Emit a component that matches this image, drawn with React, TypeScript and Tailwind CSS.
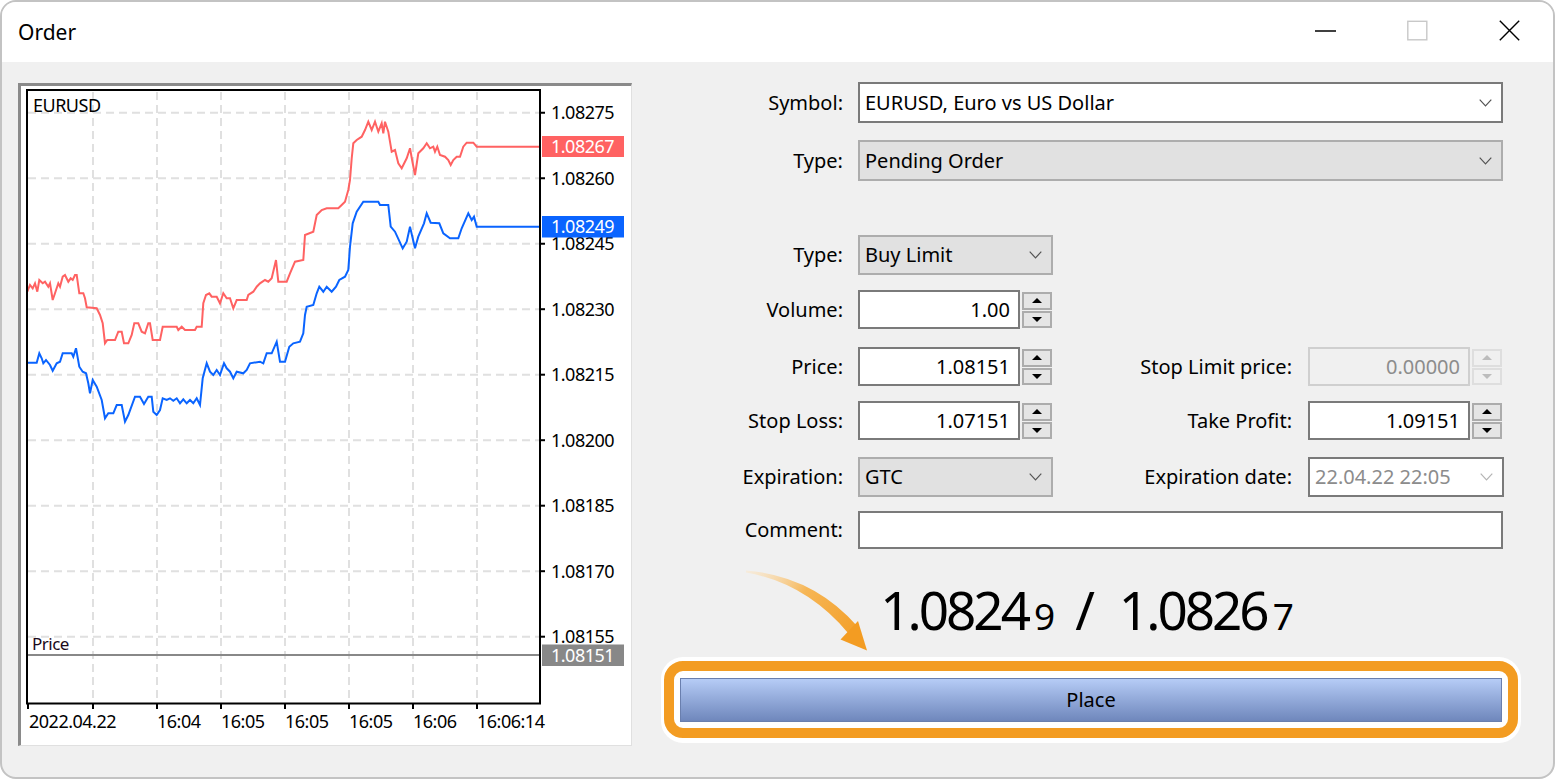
import React from 'react';

const RED = '#ff6262';
const BLUE = '#0a64ff';

const redPoints =
  '27.3,291.7 30,285 32.7,288.3 35,283.3 37.3,291.7 39.3,280 42.7,283.3 45,281.7 48.3,286.7 50,283.3 52.7,300 55,293.3 58.3,283.3 60,286.7 62.7,276.7 65,275 68.3,281.7 70.7,278.3 72.7,280 75,275 76.7,275 79.3,293.3 83.3,293.3 85,298.3 86.7,307.3 96.7,308.3 100,315 102.7,323.3 105,343.3 107.3,340 115,340 118.3,331.7 121.7,331.7 124,343.3 128.3,343.3 131.7,335 134.3,323.3 138.3,323.3 141.7,331.7 145,333.3 148.3,323.3 150,323.3 152.7,340 160,340 162.7,326.7 176.7,326.7 178.3,330 181.7,326.7 185,330 195,330 196.7,326.7 201.7,326.7 203.3,303.3 206,295 209.3,293.3 211.7,296.7 216.7,296.7 220,303.3 223.3,293.3 226.7,298.3 230,298.3 233.3,308.3 236.7,300 246.7,300 248.3,295 253.3,291.7 256.7,286.7 260,283.3 265,280 268.3,281.7 271.7,278.3 276,260 278.3,281.7 286.7,281.7 290,273.3 295,261.7 303.3,260 305,235 313.3,231.7 316.7,215 321.7,210 326.7,208.3 338.3,208.3 341.7,205 345,201.7 348.3,190 350,180 351.7,158.3 353.3,143.3 356.7,140 361.7,136.7 365,130 368.3,121.7 371.7,130 375,121.7 378.3,131.7 381.7,123.3 383.3,133.3 385,121.7 388.3,131.7 391.7,151.7 395,150 398.3,163.3 401.7,168.3 406.7,158.3 410,148.3 412.7,163.3 415,175 418.3,153.3 423.3,148.3 426.7,143.3 430,148.3 433.3,146.7 435,151.7 437.3,146.7 440,155 445,156.7 448.3,160 450.7,165 453.3,160 456.7,156.7 460,156.7 463.3,146.7 466.7,142.7 473.3,142.7 476.7,146.7 540,146.7';

const bluePoints =
  '27.3,362.7 36.7,362.7 39.3,353.3 41.7,358.3 43.3,363.3 46,360 50,365 52.7,370.7 56.7,363.3 60,361.7 62.7,353.3 71.7,353.3 73.3,356.7 76,348.3 79.3,366.7 82.7,371.7 86,373.3 88.3,383.3 90,393.3 92.7,380 96.7,386.7 101.7,400 105,418.3 108.3,413.3 113.3,413.3 116.7,405 121.7,405 125,421.7 128.3,415 135,396.7 140,396.7 144,404 148.3,396.7 151.7,396.7 153.3,411.7 156.7,415 160,410 162.7,398.3 166.7,400 170,398.3 173.3,400.7 176.7,398.3 180,403.3 183.3,399.3 186.7,403.3 190,400 193.3,403.3 196.7,398.3 200,405 202.7,378.3 206.7,363.3 210,371.7 213.3,375 216.7,370 220,375 224,363.3 226.7,368.3 230,371.7 233.3,378.3 236.7,371.7 243.3,373.3 246.7,370 250,363.3 260,361.7 263.3,363.3 266.7,353.3 271.7,353.3 276.7,341.7 280,361.7 285,361.7 289.3,346.7 293.3,343.3 300,341.7 303.3,333.3 305,315 306.7,306.7 313.3,305 316.7,293.3 319.3,286.7 323.3,291.7 326.7,286.7 331.7,291.7 336,286.7 339.3,280 345,276.7 348.3,270 350,246.7 352.7,223.3 356.7,211.7 363.3,201.7 378.3,201.7 380,205 388.3,205 390.7,226.7 395,231.7 402.7,248.3 406.7,241.7 410,226.7 415,248.3 418.3,236.7 424,223.3 426.7,213.3 430.7,222.7 439.3,223.3 443.3,233.3 450,238.3 458.3,238.3 461.7,228.3 468.3,213.3 471.7,220 474,216.7 476.7,226.7 540,226.7';

const priceLabels = ['1.08275', '1.08260', '1.08245', '1.08230', '1.08215', '1.08200', '1.08185', '1.08170', '1.08155'];
const gridXs = [93, 157, 221, 285, 349, 413, 477];
const timeLabels = [
  { x: 29, t: '2022.04.22' },
  { x: 157, t: '16:04' },
  { x: 221, t: '16:05' },
  { x: 285, t: '16:05' },
  { x: 349, t: '16:05' },
  { x: 413, t: '16:06' },
  { x: 477, t: '16:06:14' },
];

const gridY = (k: number) => 112.7 + 65.5 * k;

/**
 * Tick chart with bid/ask lines, drawn in page coordinates via the viewBox
 */
function PriceChart() {
  const font = { fontFamily: 'Noto Sans, sans-serif', fontSize: 18, letterSpacing: -0.5 };
  return (
    <svg width={610} height={659} viewBox="21 86 610 659" className="block">
      {/* grid */}
      {priceLabels.map((_, k) => (
        <line key={k} x1={28} x2={539} y1={gridY(k)} y2={gridY(k)} stroke="#e0e0e0" strokeWidth={2} strokeDasharray="8 5" />
      ))}
      {gridXs.map((x) => (
        <line key={x} x1={x} x2={x} y1={92} y2={702} stroke="#e0e0e0" strokeWidth={2} strokeDasharray="8 5" />
      ))}

      {/* pending price level */}
      <line x1={28} x2={539} y1={655} y2={655} stroke="#888888" strokeWidth={2} />
      <text x={32} y={650} {...font} fontSize={17} fill="#1a0a1a">Price</text>

      {/* ask / bid */}
      <polyline points={redPoints} fill="none" stroke={RED} strokeWidth={2} strokeLinejoin="miter" />
      <polyline points={bluePoints} fill="none" stroke={BLUE} strokeWidth={2} strokeLinejoin="miter" />

      {/* plot frame */}
      <rect x={27} y={90} width={513} height={613.5} fill="none" stroke="#000" strokeWidth={2} />
      <text x={33} y={111.5} {...font} fill="#000">EURUSD</text>

      {/* axis ticks */}
      {priceLabels.map((_, k) => (
        <line key={k} x1={540} x2={545} y1={gridY(k)} y2={gridY(k)} stroke="#000" strokeWidth={2} />
      ))}
      {[28, ...gridXs].map((x) => (
        <line key={x} x1={x} x2={x} y1={703} y2={709} stroke="#000" strokeWidth={2} />
      ))}

      {/* axis labels */}
      {priceLabels.map((p, k) => (
        <text key={p} x={551} y={gridY(k) + 6.4} {...font} fill="#000">{p}</text>
      ))}
      {timeLabels.map((l, i) => (
        <text key={i} x={l.x} y={728} {...font} fill="#000">{l.t}</text>
      ))}

      {/* current price tags */}
      <rect x={542} y={136} width={82} height={21} fill={RED} />
      <text x={551} y={153} {...font} fill="#fff">1.08267</text>
      <rect x={542} y={216} width={82} height={21.5} fill={BLUE} />
      <text x={551} y={233.2} {...font} fill="#fff">1.08249</text>
      <rect x={542} y={644.5} width={82} height={21.5} fill="#888888" />
      <text x={551} y={661.5} {...font} fill="#fff">1.08151</text>
    </svg>
  );
}

function Chevron({ color = '#505050' }: { color?: string }) {
  return (
    <svg width="13" height="8" viewBox="0 0 13 8" fill="none">
      <path d="M0.7 0.7L6.5 6.8L12.3 0.7" stroke={color} strokeWidth={1.2} />
    </svg>
  );
}

function Triangle({ up, color }: { up: boolean; color: string }) {
  return (
    <svg width="10" height="5" viewBox="0 0 10 5">
      <path d={up ? 'M0 5L5 0L10 5Z' : 'M0 0L10 0L5 5Z'} fill={color} />
    </svg>
  );
}

function Spinner({ disabled }: { disabled?: boolean }) {
  const box = disabled
    ? 'border-[#dedede] bg-[#f0f0f0]'
    : 'border-[#acacac] bg-[#e5e5e5]';
  const arrow = disabled ? '#bcbcbc' : '#000';
  return (
    <div className="ml-[2px] flex w-[30px] flex-col gap-[1px]">
      <div className={`flex h-[18px] items-center justify-center border-2 ${box}`}>
        <Triangle up color={arrow} />
      </div>
      <div className={`flex h-[17px] items-center justify-center border-2 ${box}`}>
        <Triangle up={false} color={arrow} />
      </div>
    </div>
  );
}

function NumberField({ value, disabled }: { value: string; disabled?: boolean }) {
  return (
    <div className="flex items-center">
      <div
        className={`flex h-[39px] w-[162px] items-center justify-end border-2 pr-[8px] ${
          disabled ? 'border-[#cfcfcf] text-[#8c8c8c]' : 'border-[#7a7a7a] bg-white text-black'
        }`}
      >
        {value}
      </div>
      <Spinner disabled={disabled} />
    </div>
  );
}

type ComboTone = 'white' | 'gray' | 'date';

function Combo({ value, width, height = 40, tone }: { value: string; width: number; height?: number; tone: ComboTone }) {
  const toneClass =
    tone === 'gray'
      ? 'bg-[#e1e1e1] border-[#adadad] text-black'
      : tone === 'date'
        ? 'bg-white border-[#7a7a7a] text-[#8c8c8c]'
        : 'bg-white border-[#7a7a7a] text-black';
  return (
    <div
      className={`flex items-center justify-between border-2 pl-[5px] pr-[9px] ${toneClass}`}
      style={{ width, height }}
    >
      <span className="whitespace-nowrap">{value}</span>
      <Chevron color={tone === 'date' ? '#b4b4b4' : '#555555'} />
    </div>
  );
}

function Label({ text, width = 211 }: { text: string; width?: number }) {
  return (
    <div className="shrink-0 whitespace-nowrap text-right text-black" style={{ width }}>
      {text}
    </div>
  );
}

function TitleBar() {
  return (
    <div className="flex h-[60px] shrink-0 items-start bg-white">
      <div className="pl-[16px] pt-[15px] text-[21px] text-black">Order</div>
      <div className="ml-auto flex gap-[71px] pr-[33px] pt-[18px]">
        <svg width="21" height="21" viewBox="0 0 21 21">
          <line x1="0" x2="21" y1="11" y2="11" stroke="#000" strokeWidth={1.3} />
        </svg>
        <svg width="21" height="21" viewBox="0 0 21 21">
          <rect x="0.8" y="1.3" width="19" height="18.5" fill="none" stroke="#c8c8c8" strokeWidth={1.4} />
        </svg>
        <svg width="21" height="21" viewBox="0 0 21 21">
          <path d="M0.8 0.8L20.2 20.2M20.2 0.8L0.8 20.2" stroke="#000" strokeWidth={1.4} />
        </svg>
      </div>
    </div>
  );
}

function OrderForm() {
  return (
    <div className="-mt-[1px] flex flex-1 flex-col text-[20px]">
      <div className="flex h-[41px] items-center">
        <Label text="Symbol:" />
        <div className="ml-[15px]">
          <Combo value="EURUSD, Euro vs US Dollar" width={645} height={41} tone="white" />
        </div>
      </div>

      <div className="mt-[17px] flex h-[41px] items-center">
        <Label text="Type:" />
        <div className="ml-[15px]">
          <Combo value="Pending Order" width={645} height={41} tone="gray" />
        </div>
      </div>

      <div className="mt-[54px] flex h-[40px] items-center">
        <Label text="Type:" />
        <div className="ml-[15px]">
          <Combo value="Buy Limit" width={195} tone="gray" />
        </div>
      </div>

      <div className="mt-[15px] flex h-[39px] items-center">
        <Label text="Volume:" />
        <div className="ml-[15px]">
          <NumberField value="1.00" />
        </div>
      </div>

      <div className="mt-[18px] flex h-[39px] items-center">
        <Label text="Price:" />
        <div className="ml-[15px]">
          <NumberField value="1.08151" />
        </div>
        <Label text="Stop Limit price:" width={240} />
        <div className="ml-[16px]">
          <NumberField value="0.00000" disabled />
        </div>
      </div>

      <div className="mt-[15px] flex h-[39px] items-center">
        <Label text="Stop Loss:" />
        <div className="ml-[15px]">
          <NumberField value="1.07151" />
        </div>
        <Label text="Take Profit:" width={240} />
        <div className="ml-[16px]">
          <NumberField value="1.09151" />
        </div>
      </div>

      <div className="mt-[17px] flex h-[40px] items-center">
        <Label text="Expiration:" />
        <div className="ml-[15px]">
          <Combo value="GTC" width={195} tone="gray" />
        </div>
        <Label text="Expiration date:" width={239} />
        <div className="ml-[16px]">
          <Combo value="22.04.22 22:05" width={196} tone="date" />
        </div>
      </div>

      <div className="mt-[14px] flex h-[38px] items-center">
        <Label text="Comment:" />
        <div className="ml-[15px] h-[38px] w-[645px] border-2 border-[#7a7a7a] bg-white" />
      </div>

      {/* current bid / ask */}
      <div className="ml-[29px] mt-[31px] flex h-[60px] w-[860px] justify-center pr-[8px] text-[53px] leading-[60px] text-black">
        <div className="flex items-baseline whitespace-nowrap">
          <span className="tracking-[-3px]">1.0824</span>
          <span className="ml-[6px] text-[37px]">9</span>
          <span className="ml-[20px] mr-[24px]">/</span>
          <span className="tracking-[-3px]">1.0826</span>
          <span className="ml-[6px] text-[37px]">7</span>
        </div>
      </div>

      {/* highlighted Place button */}
      <div className="ml-[29px] mt-[17px] flex h-[86px] w-[860px] rounded-[22px] bg-white px-[3px] pb-[5px] pt-[4px]">
        <div className="flex flex-1 items-center rounded-[19px] border-[10px] border-[#f39c22] bg-white px-[6px]">
          <div className="flex h-[44px] flex-1 items-center justify-center border border-[#6a7fae] bg-linear-to-b from-[#b6ccf6] to-[#6f87bc] text-black">
            Place
          </div>
        </div>
      </div>
    </div>
  );
}

function CalloutArrow() {
  return (
    <svg
      width={140}
      height={100}
      viewBox="740 562 140 100"
      className="pointer-events-none absolute left-[738px] top-[500px]"
    >
      <defs>
        <linearGradient id="arrowFade" gradientUnits="userSpaceOnUse" x1="744" y1="570" x2="862" y2="645">
          <stop offset="0" stopColor="#fde7c6" stopOpacity="0.4" />
          <stop offset="0.45" stopColor="#f6b656" />
          <stop offset="1" stopColor="#f39c22" />
        </linearGradient>
      </defs>
      <path
        d="M746 570.5 Q813 576 857 626 L848 633 Q806 583 746 572.5 Z"
        fill="url(#arrowFade)"
      />
      <path d="M840.5 639.5 L867 650.5 L858 621 Z" fill="#f39c22" />
    </svg>
  );
}

export default function App() {
  return (
    <div className="h-[780px] w-[1556px] bg-white font-['Noto_Sans',sans-serif]">
      <div className="flex h-[779px] w-[1555px] flex-col overflow-hidden rounded-[16px] border-2 border-[#c3c3c3] bg-[#f0f0f0]">
        <TitleBar />
        <div className="relative flex flex-1 pl-[16px] pt-[21px]">
          <div className="h-[663px] w-[614px] shrink-0 border-b border-l-[3px] border-r border-t-[3px] border-b-[#e0e0e0] border-l-[#8a8a8a] border-r-[#e0e0e0] border-t-[#8a8a8a] bg-white">
            <PriceChart />
          </div>
          <OrderForm />
          <CalloutArrow />
        </div>
      </div>
    </div>
  );
}
